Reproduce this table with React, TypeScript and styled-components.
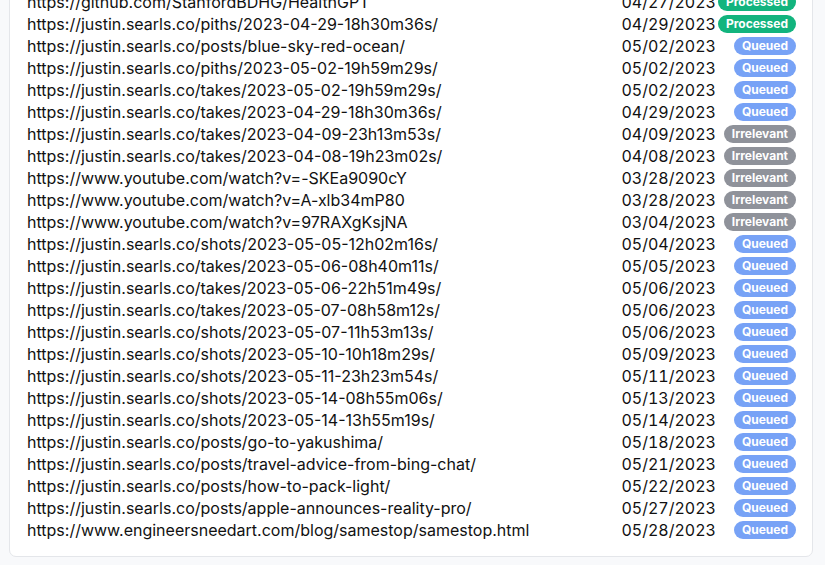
import React from 'react'
import styled, { createGlobalStyle } from 'styled-components';

const GlobalStyle = createGlobalStyle`
    html, body {
        margin: 0;
        padding: 0;
        background: #f8f9fb;
        font-family: 'Inter', 'Liberation Sans', sans-serif;
        overflow: hidden;
    }
`;

const Page = styled.div`
    padding: 0 12px 8px 9px;
    // the list is scrolled: the top of the card sits above the window
    margin-top: -26px;
`;

const Card = styled.div`
    background: #ffffff;
    border: 1px solid #e4e6ea;
    border-radius: 7px;
    padding: 16px 16px 15px 17px;
`;

const Table = styled.div`
    display: grid;
    grid-template-columns: 1fr auto auto;
    column-gap: 2px;
    grid-auto-rows: 22px;
    align-items: center;
`;

const Url = styled.div`
    font-size: 16px;
    color: #111111;
    white-space: nowrap;
`;

const Date = styled.div`
    font-size: 16px;
    color: #111111;
    font-variant-numeric: tabular-nums;
    white-space: nowrap;
`;

type Status = 'Processed' | 'Queued' | 'Irrelevant';

const colours: Record<Status, string> = {
    Processed: '#12b47e',
    Queued: '#77a2f6',
    Irrelevant: '#8f929a',
};

const Badge = styled.span<{ $status: Status }>`
    justify-self: end;
    display: inline-flex;
    align-items: center;
    height: 18px;
    padding: 0 8px;
    border-radius: 9px;
    background: ${p => colours[p.$status]};
    color: #ffffff;
    font-size: 12px;
    font-weight: 700;
    line-height: 1;
`;

const Links: [string, string, Status][] = [
    ['https://github.com/StanfordBDHG/HealthGPT', '04/27/2023', 'Processed'],
    ['https://justin.searls.co/piths/2023-04-29-18h30m36s/', '04/29/2023', 'Processed'],
    ['https://justin.searls.co/posts/blue-sky-red-ocean/', '05/02/2023', 'Queued'],
    ['https://justin.searls.co/piths/2023-05-02-19h59m29s/', '05/02/2023', 'Queued'],
    ['https://justin.searls.co/takes/2023-05-02-19h59m29s/', '05/02/2023', 'Queued'],
    ['https://justin.searls.co/takes/2023-04-29-18h30m36s/', '04/29/2023', 'Queued'],
    ['https://justin.searls.co/takes/2023-04-09-23h13m53s/', '04/09/2023', 'Irrelevant'],
    ['https://justin.searls.co/takes/2023-04-08-19h23m02s/', '04/08/2023', 'Irrelevant'],
    ['https://www.youtube.com/watch?v=-SKEa9090cY', '03/28/2023', 'Irrelevant'],
    ['https://www.youtube.com/watch?v=A-xlb34mP80', '03/28/2023', 'Irrelevant'],
    ['https://www.youtube.com/watch?v=97RAXgKsjNA', '03/04/2023', 'Irrelevant'],
    ['https://justin.searls.co/shots/2023-05-05-12h02m16s/', '05/04/2023', 'Queued'],
    ['https://justin.searls.co/takes/2023-05-06-08h40m11s/', '05/05/2023', 'Queued'],
    ['https://justin.searls.co/takes/2023-05-06-22h51m49s/', '05/06/2023', 'Queued'],
    ['https://justin.searls.co/takes/2023-05-07-08h58m12s/', '05/06/2023', 'Queued'],
    ['https://justin.searls.co/shots/2023-05-07-11h53m13s/', '05/06/2023', 'Queued'],
    ['https://justin.searls.co/shots/2023-05-10-10h18m29s/', '05/09/2023', 'Queued'],
    ['https://justin.searls.co/shots/2023-05-11-23h23m54s/', '05/11/2023', 'Queued'],
    ['https://justin.searls.co/shots/2023-05-14-08h55m06s/', '05/13/2023', 'Queued'],
    ['https://justin.searls.co/shots/2023-05-14-13h55m19s/', '05/14/2023', 'Queued'],
    ['https://justin.searls.co/posts/go-to-yakushima/', '05/18/2023', 'Queued'],
    ['https://justin.searls.co/posts/travel-advice-from-bing-chat/', '05/21/2023', 'Queued'],
    ['https://justin.searls.co/posts/how-to-pack-light/', '05/22/2023', 'Queued'],
    ['https://justin.searls.co/posts/apple-announces-reality-pro/', '05/27/2023', 'Queued'],
    ['https://www.engineersneedart.com/blog/samestop/samestop.html', '05/28/2023', 'Queued'],
];

function App() {
    return (
        <Page>
            <GlobalStyle />
            <Card>
                <Table>
                    {Links.map(([url, date, status], index) => (
                        <React.Fragment key={index}>
                            <Url>{url}</Url>
                            <Date>{date}</Date>
                            <Badge $status={status}>{status}</Badge>
                        </React.Fragment>
                    ))}
                </Table>
            </Card>
        </Page>
    )
}

export default App;
